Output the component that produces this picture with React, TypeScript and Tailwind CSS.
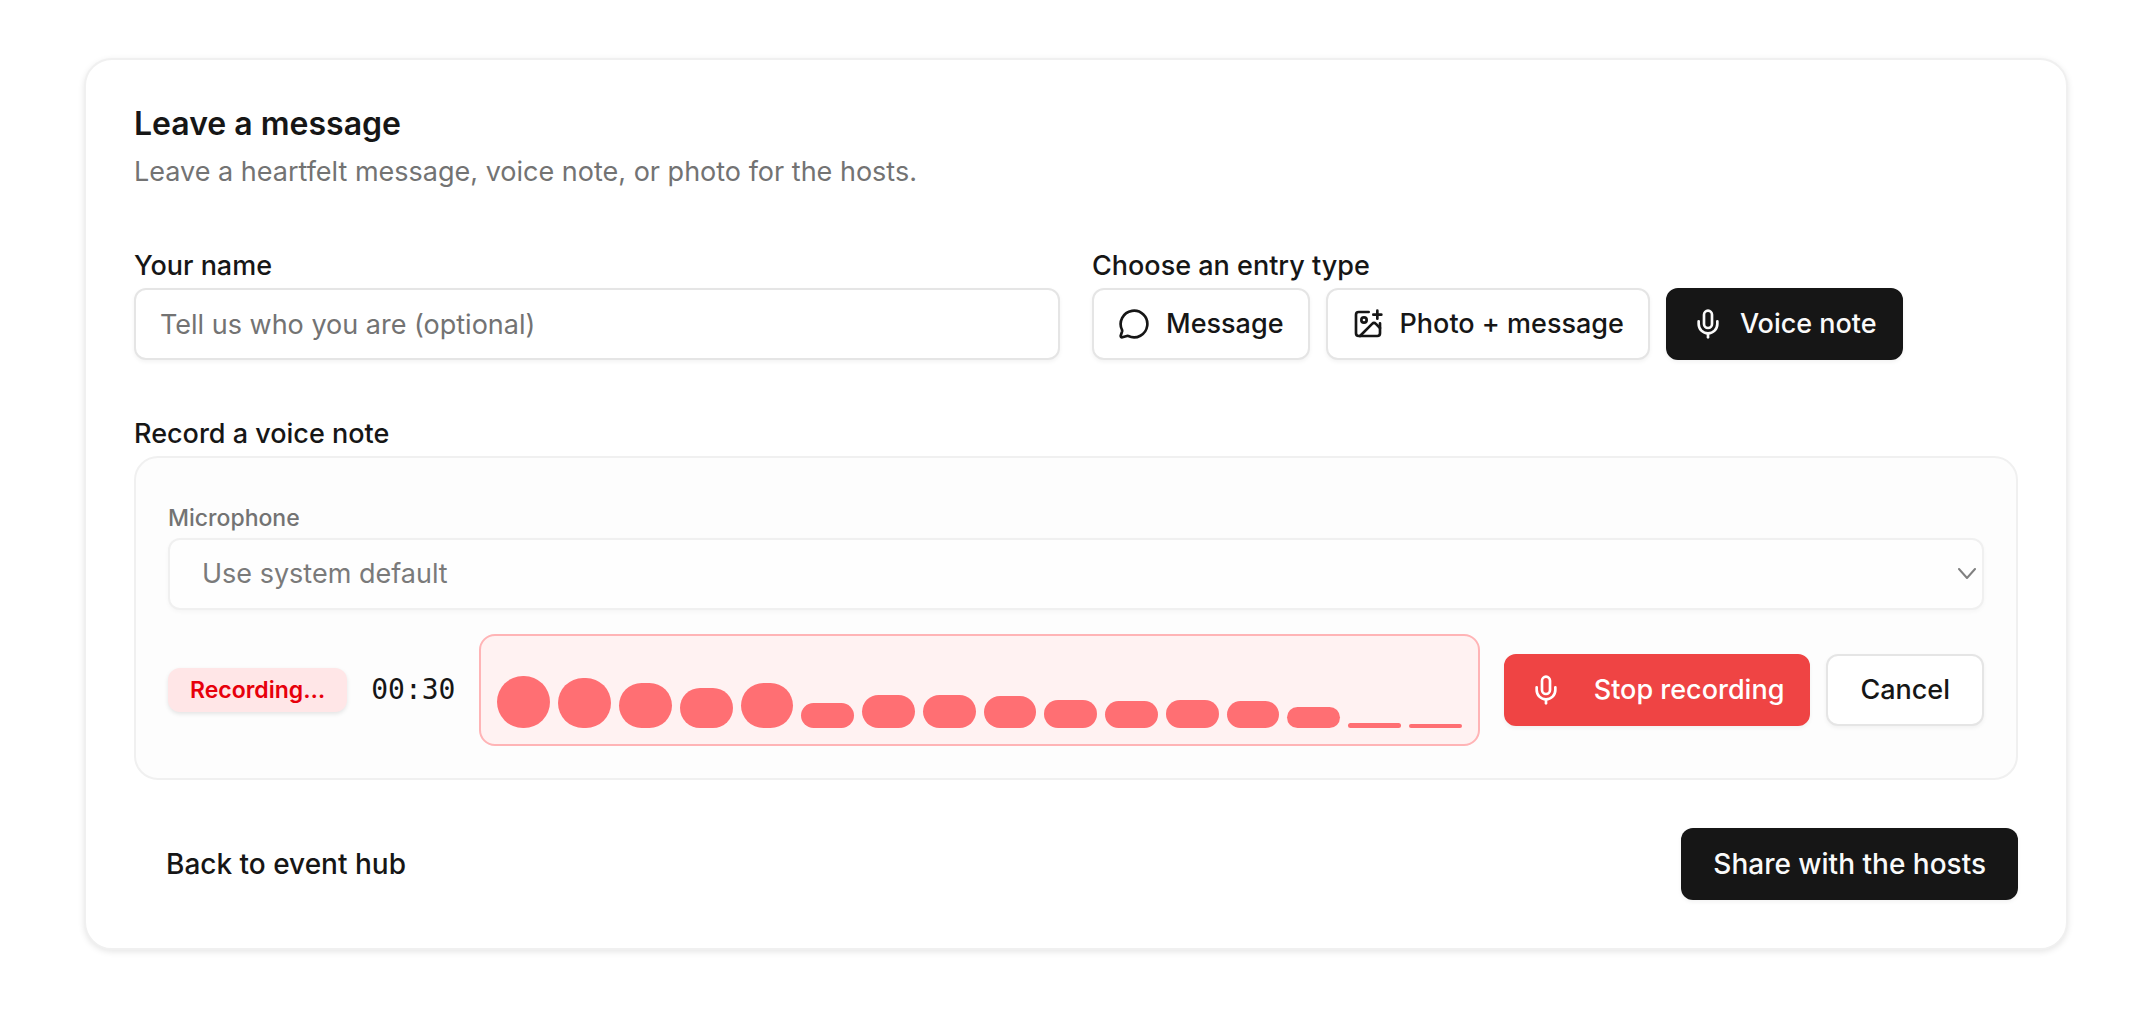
import { useState } from 'react';
import { ImagePlus, MessageCircle, Mic } from 'lucide-react';
import { clsx } from 'clsx';

type EntryType = 'message' | 'photo' | 'voice';

const entryTypes = [
  { id: 'message' as EntryType, label: 'Message', icon: MessageCircle },
  { id: 'photo' as EntryType, label: 'Photo + message', icon: ImagePlus },
  { id: 'voice' as EntryType, label: 'Voice note', icon: Mic },
];

// Input levels, in pixels of bar height
const levels = [52, 50, 45, 40, 45, 25, 33, 33, 32, 28, 27, 28, 27, 21, 5, 4];

const buttonBase =
  'inline-flex h-[72px] shrink-0 items-center justify-center gap-4 whitespace-nowrap rounded-xl leading-10 font-medium';
const outline = 'border-2 border-[#e5e5e5] bg-white text-[#161616] shadow-[0_2px_4px_rgba(0,0,0,0.05)]';
const primary = 'bg-[#161616] text-[#fafafa] shadow-[0_2px_4px_rgba(0,0,0,0.05)]';
const destructive = 'border-2 border-[#ef4444] bg-[#ef4444] text-white shadow-[0_2px_4px_rgba(0,0,0,0.05)]';

function LevelMeter() {
  return (
    <div className="flex h-28 min-w-0 flex-1 items-end gap-2 rounded-2xl border-2 border-[#ffb4b6] bg-[#fff2f2] p-4">
      {levels.map((height, i) => (
        <div key={i} className="flex-1 rounded-full bg-[#ff6f73]" style={{ height }} />
      ))}
    </div>
  );
}

function VoiceRecorder() {
  return (
    <div className="rounded-3xl border-2 border-[#f0f0f0] bg-[#fdfdfd] px-8 pt-11 pb-8">
      <div className="flex flex-col gap-1">
        <label htmlFor="microphone" className="text-[23px] leading-8 font-medium text-[#737373]">
          Microphone
        </label>
        <div className="grid items-center">
          <select
            id="microphone"
            disabled
            className="col-start-1 row-start-1 h-[72px] w-full appearance-none rounded-xl border-2 border-[#f0f0f0] bg-[#fefefe] px-8 text-[#7a7a7a] opacity-100 shadow-[0_2px_4px_rgba(0,0,0,0.03)]"
          >
            <option>Use system default</option>
          </select>
          <svg
            className="pointer-events-none col-start-1 row-start-1 mr-2 h-3 w-[18px] justify-self-end"
            viewBox="0 0 18 12"
            fill="none"
            stroke="#808080"
            strokeWidth="2"
            strokeLinecap="round"
            strokeLinejoin="round"
          >
            <path d="M1 1l8 9 8-9" />
          </svg>
        </div>
      </div>

      <div className="mt-6 flex items-center gap-6">
        <span className="rounded-xl bg-[#ffe6e7] px-[22px] py-2 text-[23px] leading-7 font-semibold text-[#e7000b] shadow-[0_2px_4px_rgba(0,0,0,0.1)]">
          Recording…
        </span>
        <span className="font-['DejaVu_Sans_Mono',monospace] text-[28px] leading-10 text-[#161616]">00:30</span>
        <LevelMeter />
        <div className="flex gap-4">
          <button type="button" className={clsx(buttonBase, destructive, 'px-6')}>
            <Mic className="mr-4 size-8" />
            Stop recording
          </button>
          <button type="button" className={clsx(buttonBase, outline, 'px-8')}>
            Cancel
          </button>
        </div>
      </div>
    </div>
  );
}

export default function App() {
  const [entryType, setEntryType] = useState<EntryType>('voice');
  const [name, setName] = useState('');

  return (
    <main className="min-h-screen bg-white pt-[58px] pr-16 pb-16 pl-[84px] font-['Inter',sans-serif] text-[27px] text-[#161616]">
      <form
        className="rounded-[28px] border-2 border-[#f0f0f0] bg-white p-12 shadow-[0_2px_6px_rgba(0,0,0,0.1)]"
        onSubmit={e => e.preventDefault()}
      >
        <header className="flex flex-col gap-3">
          <h1 className="text-[32px] leading-8 font-semibold">Leave a message</h1>
          <p className="leading-10 text-[#737373]">Leave a heartfelt message, voice note, or photo for the hosts.</p>
        </header>

        <div className="mt-15 grid grid-cols-2 gap-8">
          <div className="flex flex-col gap-2">
            <label htmlFor="name" className="leading-7 font-medium">
              Your name
            </label>
            <input
              id="name"
              type="text"
              value={name}
              onChange={e => setName(e.target.value)}
              placeholder="Tell us who you are (optional)"
              className="h-[72px] w-full rounded-xl border-2 border-[#e5e5e5] bg-white px-6 shadow-[0_2px_4px_rgba(0,0,0,0.05)] placeholder:text-[#737373]"
            />
          </div>

          <div className="flex flex-col gap-2" role="group" aria-labelledby="entry-type">
            <span id="entry-type" className="leading-7 font-medium">
              Choose an entry type
            </span>
            <div className="flex gap-4">
              {entryTypes.map(({ id, label, icon: Icon }) => (
                <button
                  key={id}
                  type="button"
                  aria-pressed={entryType === id}
                  onClick={() => setEntryType(id)}
                  className={clsx(buttonBase, 'px-6', entryType === id ? [primary, 'border-2 border-[#161616]'] : outline)}
                >
                  <Icon className="size-8" />
                  {label}
                </button>
              ))}
            </div>
          </div>
        </div>

        <section className="mt-15 flex flex-col gap-2">
          <h2 className="leading-7 font-medium">Record a voice note</h2>
          <VoiceRecorder />
        </section>

        <footer className="mt-12 flex items-center justify-between text-[28px]">
          <button type="button" className={clsx(buttonBase, 'px-8')}>
            Back to event hub
          </button>
          <button type="submit" className={clsx(buttonBase, primary, 'px-8')}>
            Share with the hosts
          </button>
        </footer>
      </form>
    </main>
  );
}
